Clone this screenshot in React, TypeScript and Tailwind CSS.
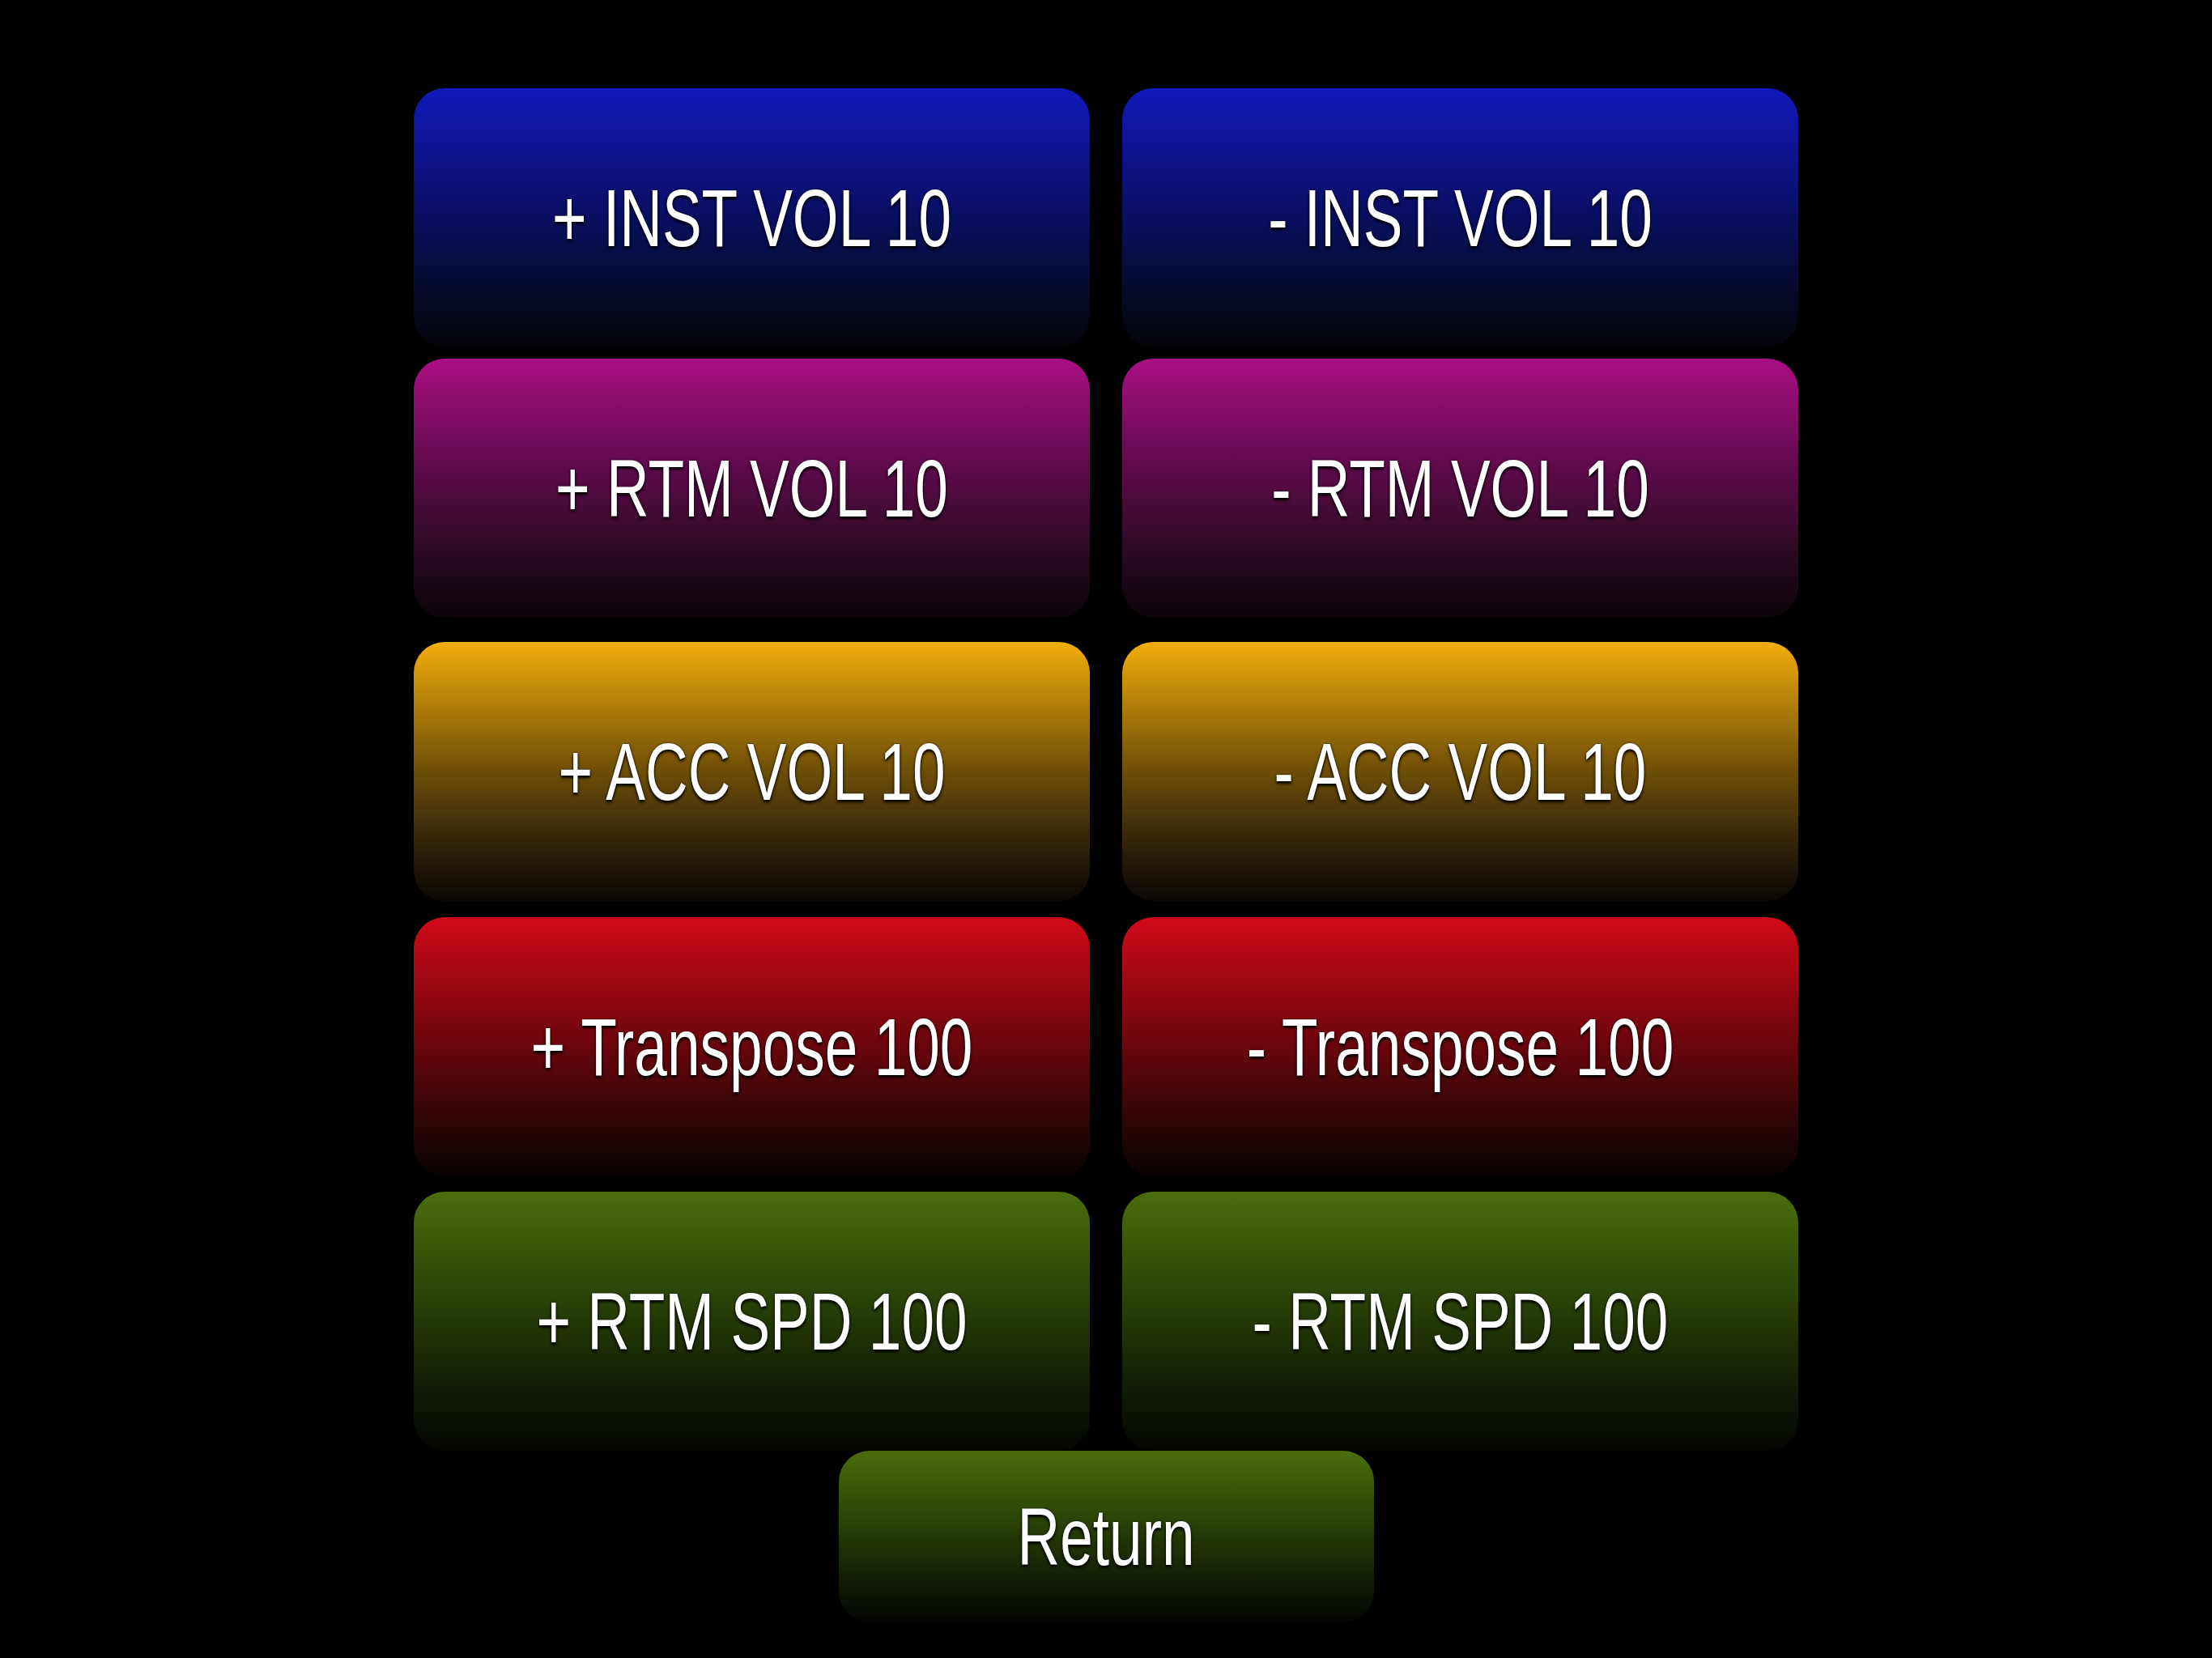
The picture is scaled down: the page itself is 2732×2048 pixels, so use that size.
import React from "react";

type BtnProps = {
  label: string;
  bg: string;
  size?: string;
};

function Btn({ label, bg, size = "w-[835px] h-[320px]" }: BtnProps) {
  return (
    <button
      className={`${size} ${bg} rounded-[38px] flex items-center justify-center shrink-0 border-0 p-0`}
    >
      <span className="inline-block text-white text-[73px] leading-none scale-y-[1.36] whitespace-pre [text-shadow:0_2px_3px_rgba(0,0,0,0.95),0_0_2px_rgba(0,0,0,0.8)]">
        {label}
      </span>
    </button>
  );
}

const rows: { l: string; r: string; bg: string; mt: string }[] = [
  {
    l: "+ INST VOL 10",
    r: "- INST VOL 10",
    bg: "bg-linear-to-b from-[#1219bc] via-[#0a0f6a] via-45% to-[#040408]",
    mt: "mt-0",
  },
  {
    l: "+ RTM VOL 10",
    r: "- RTM VOL 10",
    bg: "bg-linear-to-b from-[#aa0e84] via-[#5a0a48] via-45% to-[#0a0408]",
    mt: "mt-[14px]",
  },
  {
    l: "+ ACC VOL 10",
    r: "- ACC VOL 10",
    bg: "bg-linear-to-b from-[#f4ae0c] via-[#6e4e06] via-50% to-[#0a0704]",
    mt: "mt-[30px]",
  },
  {
    l: "+ Transpose 100",
    r: "- Transpose 100",
    bg: "bg-linear-to-b from-[#d20a18] via-[#6a050c] via-50% to-[#080202]",
    mt: "mt-[20px]",
  },
  {
    l: "+ RTM SPD 100",
    r: "- RTM SPD 100",
    bg: "bg-linear-to-b from-[#4a6e0c] via-[#283e06] via-45% to-[#040602]",
    mt: "mt-[19px]",
  },
];

export default function App() {
  return (
    <div
      className="w-full h-[2048px] bg-black flex flex-col items-center pt-[109px] overflow-hidden"
      style={{ fontFamily: '"Liberation Sans", Arial, Helvetica, sans-serif' }}
    >
      {rows.map((row) => (
        <div key={row.l} className={`flex gap-x-[40px] ${row.mt}`}>
          <Btn label={row.l} bg={row.bg} />
          <Btn label={row.r} bg={row.bg} />
        </div>
      ))}
      <Btn
        label="Return"
        bg="bg-linear-to-b from-[#4a6e0c] via-[#283e06] via-45% to-[#040602]"
        size="w-[661px] h-[212px]"
      />
    </div>
  );
}
